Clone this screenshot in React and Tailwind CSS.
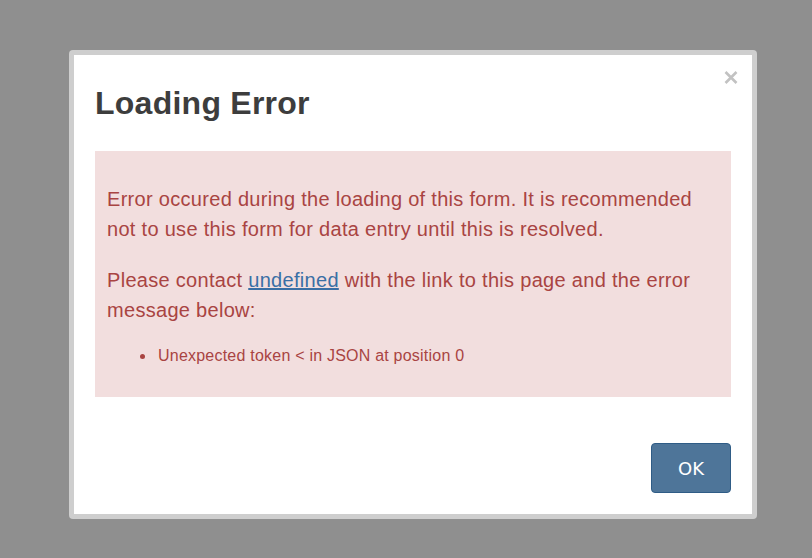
import React from 'react';

const CloseIcon = () => (
  <svg width="14" height="15" viewBox="0 0 14 15" className="block">
    <path d="M1.5 2 L12.5 13 M12.5 2 L1.5 13" stroke="#c2c2c2" strokeWidth="2.6" strokeLinecap="butt" fill="none" />
  </svg>
);

const App = () => {
  return (
    <div className="w-[812px] h-[558px] bg-[#8f8f8f] pt-[50px] pl-[69px] overflow-hidden font-['Liberation_Sans',Arial,sans-serif]">
      <div className="w-[688px] h-[469px] bg-[#cecece] rounded-[4px] p-[5px]">
        <div className="relative h-full bg-white px-[21px] pt-[30px] pb-[21px]">
          <button className="absolute top-[15px] right-[14px]">
            <CloseIcon />
          </button>

          <h1 className="text-[32px] leading-[36px] font-bold tracking-[0.25px] text-[#3d3d3d]">Loading Error</h1>

          <div className="mt-[30px] bg-[#f2dede] text-[#a94442] px-[12px] pt-[33px] pb-[29px]">
            <p className="text-[20px] leading-[30px] tracking-[0.3px]">
              Error occured during the loading of this form. It is recommended not to use this form for data entry until this is resolved.
            </p>
            <p className="mt-[21px] text-[20px] leading-[30px] tracking-[0.3px]">
              Please contact <a href="#" className="text-[#3a6fa5] underline">undefined</a> with the link to this page and the error message below:
            </p>
            <ul className="mt-[19px] pl-[33px]">
              <li className="flex items-center text-[16px] leading-[24px] tracking-[0.22px]">
                <span className="w-[5px] h-[5px] rounded-full bg-[#a94442] mr-[13px]" />
                Unexpected token &lt; in JSON at position 0
              </li>
            </ul>
          </div>

          <div className="flex justify-end mt-[46px]">
            <button className="w-[80px] h-[50px] bg-[#4e7599] border border-[#2f5c86] rounded-[4px] text-white text-[18px] font-['DejaVu_Sans',sans-serif]">
              OK
            </button>
          </div>
        </div>
      </div>
    </div>
  );
};

export default App;
